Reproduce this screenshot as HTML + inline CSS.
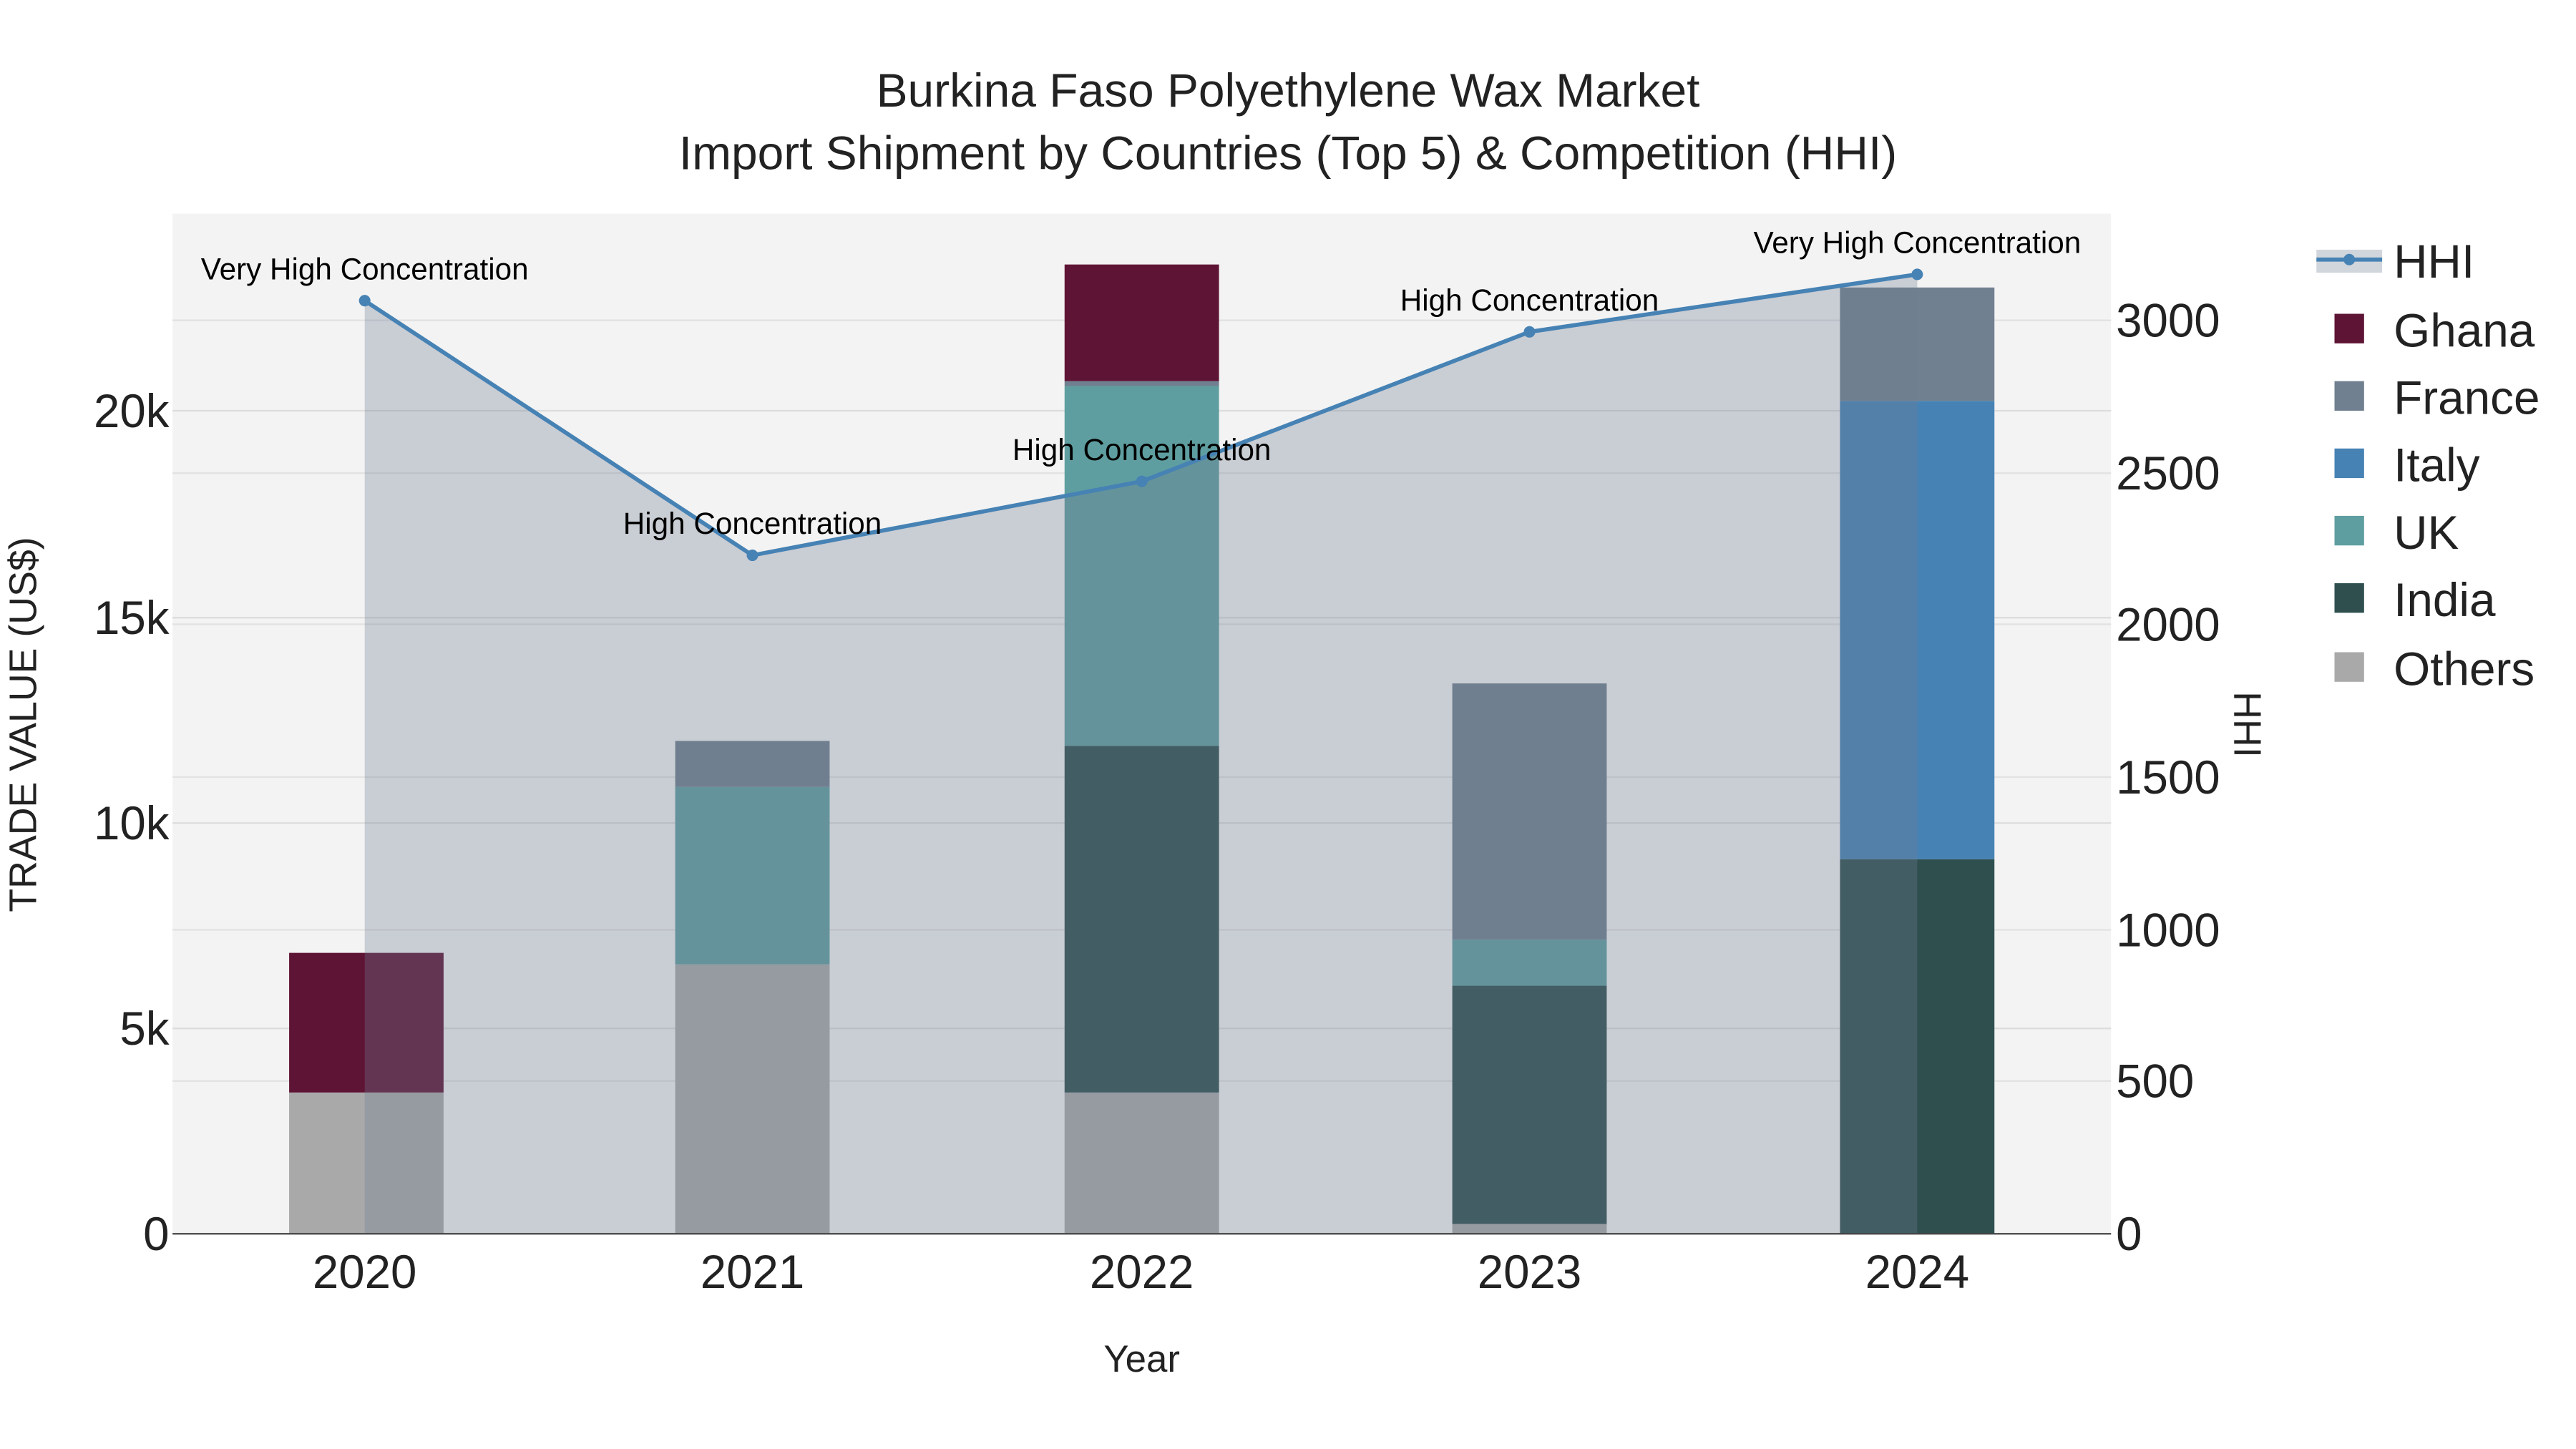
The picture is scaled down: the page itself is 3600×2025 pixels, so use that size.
<!DOCTYPE html>
<html><head><meta charset="utf-8"><style>
html,body{margin:0;padding:0;background:#fff;}
svg{display:block;}
text{font-family:"Liberation Sans",sans-serif;}
</style></head><body>
<svg width="3600" height="2025" viewBox="0 0 1568 882" xmlns="http://www.w3.org/2000/svg">
<rect x="0" y="0" width="1568" height="882" fill="#fff"/>
<rect x="105" y="130" width="1180" height="621" fill="#f3f3f3"/>
<g stroke="#e2e2e2" stroke-width="1">
<line x1="105" x2="1285" y1="658" y2="658"/><line x1="105" x2="1285" y1="566" y2="566"/>
<line x1="105" x2="1285" y1="473" y2="473"/><line x1="105" x2="1285" y1="380" y2="380"/>
<line x1="105" x2="1285" y1="288" y2="288"/><line x1="105" x2="1285" y1="195" y2="195"/>
</g>
<g stroke="#dcdcdc" stroke-width="1">
<line x1="105" x2="1285" y1="626" y2="626"/><line x1="105" x2="1285" y1="501" y2="501"/>
<line x1="105" x2="1285" y1="376" y2="376"/><line x1="105" x2="1285" y1="250" y2="250"/>
</g>
<g>
<rect x="176" y="665" width="94" height="86" fill="#a9a9a9"/>
<rect x="176" y="580" width="94" height="85" fill="#5e1434"/>
<rect x="411" y="587" width="94" height="164" fill="#a9a9a9"/>
<rect x="411" y="479" width="94" height="108" fill="#5f9ea0"/>
<rect x="411" y="451" width="94" height="28" fill="#708090"/>
<rect x="648" y="665" width="94" height="86" fill="#a9a9a9"/>
<rect x="648" y="454" width="94" height="211" fill="#2f4f4f"/>
<rect x="648" y="235" width="94" height="219" fill="#5f9ea0"/>
<rect x="648" y="232" width="94" height="3" fill="#708090"/>
<rect x="648" y="161" width="94" height="71" fill="#5e1434"/>
<rect x="884" y="745" width="94" height="6" fill="#a9a9a9"/>
<rect x="884" y="600" width="94" height="145" fill="#2f4f4f"/>
<rect x="884" y="572" width="94" height="28" fill="#5f9ea0"/>
<rect x="884" y="416" width="94" height="156" fill="#708090"/>
<rect x="1120" y="523" width="94" height="228" fill="#2f4f4f"/>
<rect x="1120" y="244" width="94" height="279" fill="#4682b4"/>
<rect x="1120" y="175" width="94" height="69" fill="#708090"/>
</g>
<polygon points="222,751 222,183 458,338 695,293 931,202 1167,167 1167,751" fill="rgb(113,125,147)" fill-opacity="0.32"/>
<polyline points="222,183 458,338 695,293 931,202 1167,167" fill="none" stroke="#4682b4" stroke-width="2.5"/>
<g fill="#4682b4"><circle cx="222" cy="183" r="3.5"/><circle cx="458" cy="338" r="3.5"/><circle cx="695" cy="293" r="3.5"/><circle cx="931" cy="202" r="3.5"/><circle cx="1167" cy="167" r="3.5"/></g>
<line x1="105" x2="1285" y1="751" y2="751" stroke="#444" stroke-width="1"/>
<g font-size="18.4" text-anchor="middle" fill="#000">
<text x="222" y="170">Very High Concentration</text>
<text x="458" y="325">High Concentration</text>
<text x="695" y="280">High Concentration</text>
<text x="931" y="189">High Concentration</text>
<text x="1167" y="154">Very High Concentration</text>
</g>
<g font-size="28.7" text-anchor="middle" fill="#222">
<text x="784" y="65">Burkina Faso Polyethylene Wax Market</text>
<text x="784" y="103">Import Shipment by Countries (Top 5) &amp; Competition (HHI)</text>
</g>
<g font-size="28.5" text-anchor="end" fill="#222">
<text x="103" y="761">0</text><text x="103" y="636">5k</text><text x="103" y="511">10k</text>
<text x="103" y="386">15k</text><text x="103" y="260">20k</text>
</g>
<text transform="translate(22,441) rotate(-90)" font-size="23.4" text-anchor="middle" fill="#222">TRADE VALUE (US$)</text>
<g font-size="28.5" fill="#222">
<text x="1288" y="761">0</text><text x="1288" y="668">500</text><text x="1288" y="576">1000</text>
<text x="1288" y="483">1500</text><text x="1288" y="390">2000</text><text x="1288" y="298">2500</text><text x="1288" y="205">3000</text>
</g>
<text transform="translate(1360,441) rotate(90)" font-size="23.4" text-anchor="middle" fill="#222">HHI</text>
<g font-size="28.5" text-anchor="middle" fill="#222">
<text x="222" y="784">2020</text><text x="458" y="784">2021</text><text x="695" y="784">2022</text>
<text x="931" y="784">2023</text><text x="1167" y="784">2024</text>
</g>
<text x="695" y="835" font-size="23" text-anchor="middle" fill="#222">Year</text>
<rect x="1410" y="152" width="40" height="14" fill="rgb(113,125,147)" fill-opacity="0.32"/>
<line x1="1410" x2="1450" y1="158" y2="158" stroke="#4682b4" stroke-width="2.5"/>
<circle cx="1430" cy="158" r="3.5" fill="#4682b4"/>
<g>
<rect x="1421" y="191" width="18" height="18" fill="#5e1434"/>
<rect x="1421" y="232" width="18" height="18" fill="#708090"/>
<rect x="1421" y="273" width="18" height="18" fill="#4682b4"/>
<rect x="1421" y="314" width="18" height="18" fill="#5f9ea0"/>
<rect x="1421" y="355" width="18" height="18" fill="#2f4f4f"/>
<rect x="1421" y="397" width="18" height="18" fill="#a9a9a9"/>
</g>
<g font-size="28.6" fill="#222">
<text x="1457" y="169">HHI</text><text x="1457" y="211">Ghana</text><text x="1457" y="252">France</text>
<text x="1457" y="293">Italy</text><text x="1457" y="334">UK</text><text x="1457" y="375">India</text><text x="1457" y="417">Others</text>
</g>
</svg>
</body></html>
